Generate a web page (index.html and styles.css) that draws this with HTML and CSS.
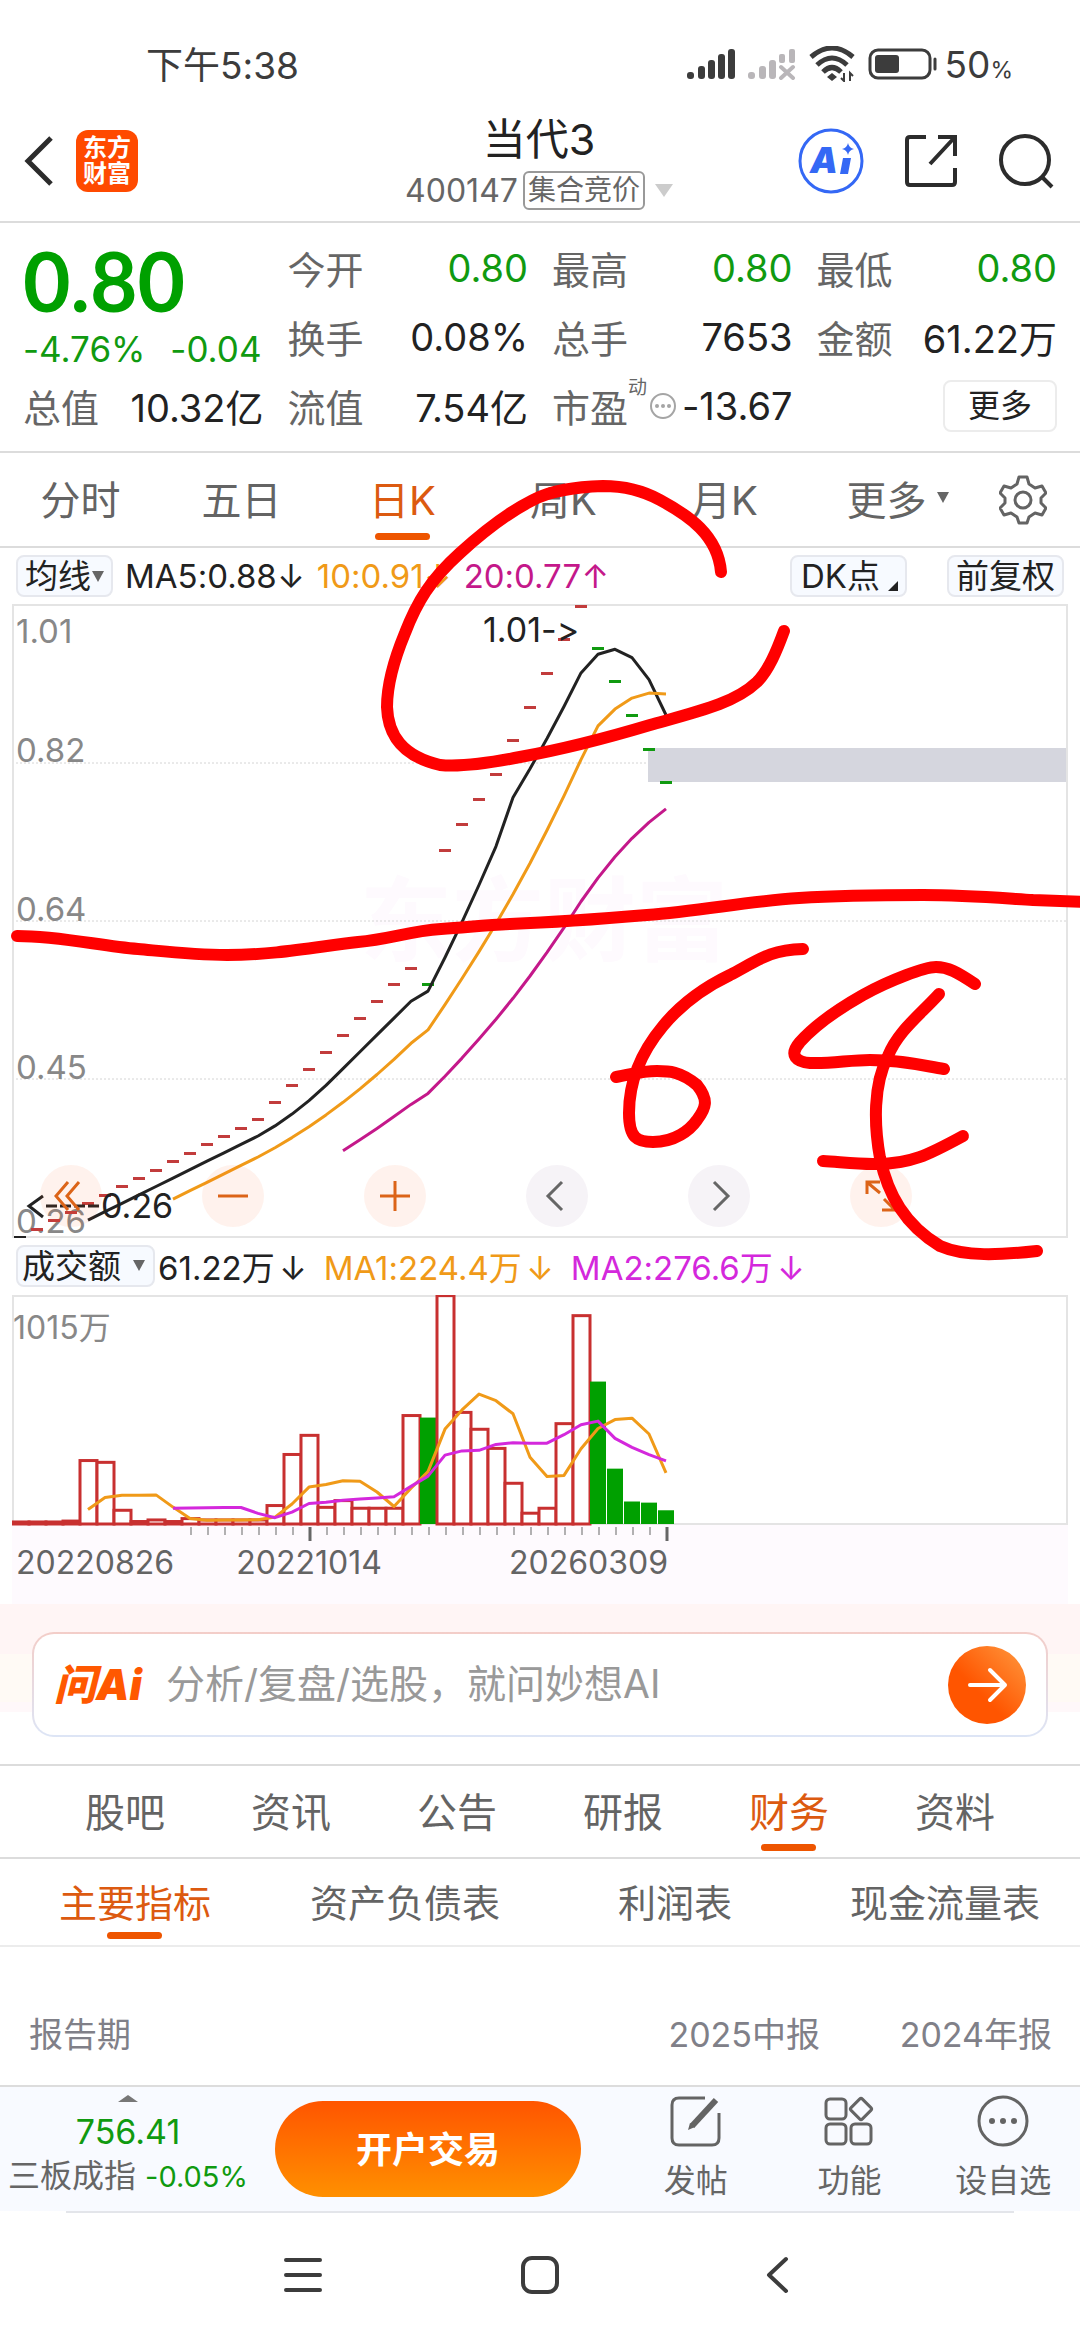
FILE: index.html
```html
<!DOCTYPE html>
<html lang="zh-CN">
<head>
<meta charset="utf-8">
<meta name="viewport" content="width=device-width, initial-scale=1">
<title>当代3 400147</title>
<link rel="stylesheet" href="styles.css">
</head>
<body>
<div class="page">

  <div class="status">
    <span class="status-time">下午5:38</span>
    <div class="status-icons">
      <svg width="50" height="32" viewBox="0 0 50 32" fill="#3c3c3c"><rect y="24" width="7" height="7" rx="3"/><rect x="11" y="18" width="7" height="13" rx="3"/><rect x="21" y="12" width="7" height="19" rx="3"/><rect x="31" y="6" width="7" height="25" rx="3"/><rect x="41" y="1" width="7" height="30" rx="3"/></svg>
      <svg width="50" height="32" viewBox="0 0 50 32" fill="#b9b6b9"><rect y="24" width="7" height="7" rx="3"/><rect x="11" y="18" width="7" height="13" rx="3"/><rect x="21" y="12" width="7" height="19" rx="3"/><rect x="31" y="6" width="6" height="9" rx="2"/><rect x="41" y="1" width="6" height="14" rx="2"/><path d="M33 19l12 11M45 19L33 30" stroke="#b9b6b9" stroke-width="4" stroke-linecap="round"/></svg>
      <svg width="48" height="36" viewBox="0 0 48 36" fill="none" stroke="#3c3c3c" stroke-width="5"><path d="M2 11Q23-7 44 11M8 19Q23 5 38 19M14 26Q23 17 32 26"/><path d="M23 27l5 4-5 4-5-4z" fill="#3c3c3c" stroke="none"/><path d="M35 27v8l-3-3M41 35v-8l3 3" stroke-width="2"/></svg>
      <svg width="70" height="32" viewBox="0 0 70 32"><rect x="2" y="2" width="60" height="28" rx="8" fill="none" stroke="#3c3c3c" stroke-width="3"/><rect x="7" y="7" width="24" height="18" rx="3" fill="#3c3c3c"/><path d="M67 11v10" stroke="#3c3c3c" stroke-width="3" stroke-linecap="round"/></svg>
      <span class="status-battery">50<small>%</small></span>
    </div>
  </div>

  <header class="header">
    <div class="header-side">
      <button class="icon-button" aria-label="返回"><svg width="30" height="50" viewBox="0 0 30 50" fill="none" stroke="#2c2c2c" stroke-width="5"><path d="M27 2L4 25l23 23"/></svg></button>
      <a class="brand" href="#">东方<br>财富</a>
    </div>
    <div class="header-title">
      <h1>当代3</h1>
      <button class="subtitle"><span>400147</span><span class="tag">集合竞价</span><i class="tri tri-pale"></i></button>
    </div>
    <div class="header-side header-actions">
      <button class="icon-button" aria-label="AI"><svg width="66" height="66" viewBox="0 0 66 66"><circle cx="33" cy="33" r="31" fill="none" stroke="#3468f5" stroke-width="3"/><text x="12" y="45" class="ai-mark">A</text><path d="M45 30h8l-3 16h-8zM50 15q1 5 6 6-5 1-6 6-1-5-6-6 5-1 6-6z" fill="#3468f5"/></svg></button>
      <button class="icon-button" aria-label="分享"><svg width="54" height="54" viewBox="0 0 54 54" fill="none" stroke="#2c2c2c" stroke-width="4"><path d="M22 3H6q-3 0-3 3v42q0 3 3 3h42q3 0 3-3V34M34 3h17v19M51 3L26 30"/></svg></button>
      <button class="icon-button" aria-label="搜索"><svg width="56" height="56" viewBox="0 0 56 56" fill="none" stroke="#2c2c2c" stroke-width="4"><circle cx="27" cy="27" r="24"/><path d="M43 43l11 11"/></svg></button>
    </div>
  </header>

  <section class="quote">
    <div class="quote-price">
      <strong>0.80</strong>
      <div class="pair down change"><span>-4.76%</span><span>-0.04</span></div>
    </div>
    <div class="pair"><span class="label">今开</span><span class="down">0.80</span></div>
    <div class="pair"><span class="label">最高</span><span class="down">0.80</span></div>
    <div class="pair"><span class="label">最低</span><span class="down">0.80</span></div>
    <div class="pair"><span class="label">换手</span><span>0.08%</span></div>
    <div class="pair"><span class="label">总手</span><span>7653</span></div>
    <div class="pair"><span class="label">金额</span><span>61.22万</span></div>
    <div class="pair"><span class="label">总值</span><span>10.32亿</span></div>
    <div class="pair"><span class="label">流值</span><span>7.54亿</span></div>
    <div class="pair"><span class="label pe">市盈<sup>动</sup><svg width="28" height="28" viewBox="0 0 28 28" fill="#a5a5a5"><circle cx="14" cy="14" r="12" fill="none" stroke="#a5a5a5" stroke-width="2"/><circle cx="8" cy="14" r="2"/><circle cx="14" cy="14" r="2"/><circle cx="20" cy="14" r="2"/></svg></span><span>-13.67</span></div>
    <button class="more">更多</button>
  </section>

  <nav class="tabs period-tabs">
    <a href="#">分时</a><a href="#">五日</a><a href="#" class="active">日K</a><a href="#">周K</a><a href="#">月K</a><a href="#">更多<i class="tri"></i></a>
    <button class="icon-button" aria-label="设置"><svg width="48" height="50" viewBox="0 0 48 50" fill="none" stroke="#646464" stroke-width="3" stroke-linejoin="round"><path d="M20 2h8l2 7 6 4 7-2 4 7-5 5v5l5 5-4 7-7-2-6 4-2 6h-8l-2-6-6-4-7 2-4-7 5-5v-5l-5-5 4-7 7 2 6-4z"/><circle cx="24" cy="25" r="8"/></svg></button>
  </nav>

  <div class="indicators">
    <button class="chip chip-ma">均线<i class="tri"></i></button>
    <span class="ma5">MA5:0.88<b>↓</b></span><span class="ma10">10:0.91<b>↓</b></span><span class="ma20">20:0.77<b>↑</b></span>
    <span class="spacer"></span>
    <button class="chip chip-dk">DK点<i class="corner"></i></button>
    <button class="chip">前复权</button>
  </div>

  <div class="chart">
    <svg class="plot" id="price-chart" viewBox="0 0 1056 634">
      <text x="348" y="350" class="watermark">东方财富</text>
      <g class="grid"><path d="M0 159H1056M0 317H1056M0 475H1056"/></g>
      <rect x="636" y="144" width="419" height="34" fill="#d5d6de"/>
      <path class="frame" d="M1 1H1055V633H1Z"/>
      <g class="axis"><text x="4" y="39">1.01</text><text x="4" y="158">0.82</text><text x="4" y="317">0.64</text><text x="4" y="475">0.45</text><text x="4" y="629">0.26</text></g>
      <g class="series"></g>
      <g class="mark"><text x="471" y="38">1.01-&gt;</text><text x="89" y="614">0.26</text><path d="M31 592L17 602l14 11"/><path class="dashes" d="M34 602H88"/></g>
    </svg>
    <div class="chart-tools">
      <button class="warm" aria-label="最早"><svg viewBox="0 0 62 62"><path d="M28 17L16 31l12 14M39 17L27 31l12 14"/></svg></button>
      <button class="warm" aria-label="缩小"><svg viewBox="0 0 62 62"><path d="M16 31h30"/></svg></button>
      <button class="warm" aria-label="放大"><svg viewBox="0 0 62 62"><path d="M16 31h30M31 16v30"/></svg></button>
      <button aria-label="左移"><svg viewBox="0 0 62 62"><path d="M36 17L22 31l14 14"/></svg></button>
      <button aria-label="右移"><svg viewBox="0 0 62 62"><path d="M26 17l14 14-14 14"/></svg></button>
      <button class="warm" aria-label="全屏"><svg viewBox="0 0 62 62"><path d="M17 29V17h13M18 18l12 10M45 33v12H32M44 44L34 34"/></svg></button>
    </div>
  </div>

  <div class="indicators indicators-volume">
    <button class="chip chip-volume">成交额<i class="tri"></i></button>
    <span class="vol">61.22万<b>↓</b></span><span class="ma10">MA1:224.4万<b>↓</b></span><span class="vol-ma2">MA2:276.6万<b>↓</b></span>
  </div>
  <div class="chart">
    <svg class="plot" id="volume-chart" viewBox="0 0 1056 309">
      <rect y="230" width="1056" height="79" fill="#fefafe"/>
      <path class="frame" d="M1 1H1055V229H1Z"/>
      <text x="1" y="44" class="axis-volume">1015万</text>
      <g class="series"></g>
      <g class="dates"><text x="4" y="279">20220826</text><text x="297" y="279" text-anchor="middle">20221014</text><text x="656" y="279" text-anchor="end">20260309</text></g>
    </svg>
  </div>

  <section class="ask">
    <form class="ask-box">
      <label class="ask-logo" for="ask">问Ai</label>
      <input id="ask" type="text" placeholder="分析/复盘/选股，就问妙想AI">
      <button type="button" aria-label="发送"><svg width="78" height="78" viewBox="0 0 78 78" fill="none" stroke="#fff" stroke-width="4" stroke-linecap="round" stroke-linejoin="round"><path d="M22 39h34M42 24l15 15-15 15"/></svg></button>
    </form>
  </section>

  <nav class="tabs info-tabs"><a href="#">股吧</a><a href="#">资讯</a><a href="#">公告</a><a href="#">研报</a><a href="#" class="active">财务</a><a href="#">资料</a></nav>
  <nav class="tabs report-tabs"><a href="#" class="active">主要指标</a><a href="#">资产负债表</a><a href="#">利润表</a><a href="#">现金流量表</a></nav>

  <table class="report">
    <tr><th scope="col">报告期</th><th scope="col">2025中报</th><th scope="col">2024年报</th></tr>
  </table>

  <footer class="dock">
    <button class="index">
      <i class="tri tri-up"></i>
      <span class="index-value">756.41</span>
      <span class="index-name">三板成指 <small>-0.05%</small></span>
    </button>
    <button class="trade">开户交易</button>
    <div class="dock-links">
      <a href="#"><svg width="52" height="52" viewBox="0 0 52 52" fill="none" stroke="#646464" stroke-width="3"><path d="M35 3H9Q2 3 2 10v33q0 7 7 7h33q7 0 7-7V18"/><path d="M22 31L46 5" stroke-width="6"/><path d="M18 35l2-7 5 4z" fill="#646464" stroke="none"/></svg>发帖</a>
      <a href="#"><svg width="52" height="52" viewBox="0 0 52 52" fill="none" stroke="#646464" stroke-width="3"><rect x="3" y="4" width="20" height="20" rx="4"/><rect x="3" y="29" width="20" height="20" rx="4"/><rect x="28" y="29" width="20" height="20" rx="4"/><rect x="30" y="6" width="16" height="16" rx="2" transform="rotate(45 38 14)"/></svg>功能</a>
      <a href="#"><svg width="52" height="52" viewBox="0 0 52 52" fill="#646464"><circle cx="26" cy="26" r="24" fill="none" stroke="#646464" stroke-width="3"/><circle cx="15" cy="26" r="3"/><circle cx="26" cy="26" r="3"/><circle cx="37" cy="26" r="3"/></svg>设自选</a>
    </div>
  </footer>

  <div class="system-nav">
    <button class="icon-button" aria-label="任务"><svg width="38" height="38" viewBox="0 0 38 38" stroke="#3c3c3c" stroke-width="4" stroke-linecap="round"><path d="M2 4h34M2 19h34M2 34h34"/></svg></button>
    <button class="icon-button" aria-label="主页"><svg width="38" height="38" viewBox="0 0 38 38" fill="none" stroke="#3c3c3c" stroke-width="4"><rect x="2" y="2" width="34" height="34" rx="9"/></svg></button>
    <button class="icon-button" aria-label="后退"><svg width="38" height="38" viewBox="0 0 38 38" fill="none" stroke="#3c3c3c" stroke-width="4" stroke-linecap="round" stroke-linejoin="round"><path d="M28 3L11 19l17 16"/></svg></button>
  </div>

  <!-- Hand-drawn markup over the chart -->
  <svg class="ink" viewBox="0 0 1080 2340" aria-hidden="true">
    <path d="M721 572C718 535 688 515 660 500C640 489 622 486 603 486C575 487 552 490 533 500C505 514 482 533 460 553C430 580 417 602 405 633C393 662 387 685 387 707C388 735 402 756 440 765C460 767 490 763 520 757C570 748 610 737 650 725C700 711 735 703 757 682C769 670 777 650 784 631"/>
    <path d="M17 936C60 936 100 946 138 949C170 952 195 955 227 955C275 955 315 947 358 942C390 939 410 931 441 929C470 927 485 925 510 924C560 922 600 919 647 915C700 911 750 901 799 898C845 895 880 895 923 895C965 895 1000 898 1033 900L1086 902"/>
    <path d="M803 949C770 950 760 959 730 975C705 987 682 1003 663 1026C643 1050 629 1078 629 1113C629 1138 637 1142 653 1142C675 1142 690 1130 697 1120C706 1108 709 1100 697 1085C680 1071 668 1071 657 1071C640 1071 630 1075 616 1077"/>
    <path d="M975 984C957 972 948 967 936 967C925 967 890 980 863 995C840 1008 818 1022 800 1042C788 1056 797 1062 810 1063C830 1064 850 1060 870 1060C900 1060 920 1065 944 1069"/>
    <path d="M939 994C920 1015 898 1031 888 1056C873 1085 874 1125 880 1158C888 1195 905 1225 940 1246C965 1257 1000 1255 1037 1251"/>
    <path d="M823 1161C840 1162 855 1164 873 1164C910 1165 930 1154 963 1136"/>
  </svg>
</div>
<script src="chart.js"></script>
</body>
</html>
```

FILE: styles.css
```css
* { box-sizing: border-box; }
body { margin: 0; background: #fff; color: #222; font-family: Inter, "Noto Sans CJK SC", sans-serif; font-feature-settings: "calt" 0; }
button, input { margin: 0; padding: 0; border: 0; background: none; color: inherit; font: inherit; font-feature-settings: inherit; }
a { color: inherit; text-decoration: none; }
svg { display: block; flex: none; }
.page { position: relative; }
.icon-button { display: flex; align-items: center; justify-content: center; }

.tri { flex: none; border: 6px solid transparent; border-top: 11px solid #666; border-bottom: 0; }
.tri-pale { border-width: 13px 9px 0; border-top-color: #ccc; margin-left: 10px; }
.tri-up { border-width: 0 10px 7px; border-bottom: 7px solid #777; }

/* Status bar */
.status { display: flex; justify-content: space-between; align-items: center; height: 100px; padding: 28px 67px 0 146px; color: #3c3c3c; }
.status-time { margin-bottom: 3px; font-size: 37px; }
.status-icons { display: flex; align-items: center; gap: 11px; }
.status-battery { font-size: 37px; margin-left: -4px; }
.status-battery small { font-size: 23px; }

/* Header */
.header { display: grid; grid-template-columns: 1fr auto 1fr; align-items: center; height: 123px; padding: 0 26px 0 24px; border-bottom: 2px solid #dcdcdc; }
.header-side { display: flex; align-items: center; gap: 22px; }
.header-actions { justify-content: flex-end; gap: 40px; }
.brand { width: 62px; height: 62px; padding-top: 5px; border-radius: 12px; background: #ff4a00; color: #fff; font-size: 24px; line-height: 26px; font-weight: 700; text-align: center; }
.ai-mark { font-size: 35px; font-weight: 900; font-style: italic; fill: #3468f5; }
.header-title { display: flex; flex-direction: column; align-items: center; }
h1 { margin: 0; font-size: 43px; line-height: 60px; font-weight: 400; }
.subtitle { display: flex; align-items: center; height: 44px; color: #666; font-size: 32px; }
.tag { margin-left: 5px; padding: 0 3px; border: 2px solid #999; border-radius: 6px; font-size: 28px; line-height: 35px; }

/* Quote */
.quote { display: grid; grid-template-columns: repeat(4, 1fr); grid-template-rows: repeat(3, 69px); column-gap: 24px; height: 230px; padding: 10px 23px; border-bottom: 2px solid #dcdcdc; font-size: 38px; }
.quote-price { grid-row: span 2; display: flex; flex-direction: column; }
.quote-price strong { color: #00a000; font-family: Lato, Inter, sans-serif; font-size: 82px; line-height: 94px; font-weight: 700; }
.quote-price .change { height: 44px; padding-right: 2px; font-size: 35px; }
.pair { display: flex; align-items: center; justify-content: space-between; white-space: nowrap; }
.label { color: #666; }
.down { color: #109a10; }
.pe { display: flex; align-items: center; }
.pe sup { align-self: flex-start; font-size: 19px; line-height: 20px; }
.pe svg { margin-left: 2px; }
.more { justify-self: end; align-self: center; width: 114px; height: 52px; border: 2px solid #ececec; border-radius: 8px; font-size: 32px; line-height: 46px; }

/* Tab rows */
.tabs { display: grid; border-bottom: 2px solid #dcdcdc; color: #646464; }
.tabs a { position: relative; display: flex; align-items: center; justify-content: center; gap: 10px; padding-bottom: 4px; white-space: nowrap; }
.tabs .active { color: #dc5a10; }
.tabs .active::after { content: ""; position: absolute; bottom: 6px; left: 50%; width: 55px; height: 7px; margin-left: -28px; border-radius: 4px; background: #ee5500; }
.period-tabs { grid-template-columns: repeat(5, 161fr) 185fr 66fr; height: 95px; padding-right: 24px; font-size: 40px; }
.info-tabs { grid-template-columns: repeat(6, 1fr); height: 95px; padding: 0 42px; border-top: 2px solid #dcdcdc; font-size: 40px; }
.report-tabs { grid-template-columns: repeat(4, 1fr); height: 88px; border-color: #ececec; font-size: 38px; }

/* Indicator rows */
.indicators { display: flex; align-items: center; height: 56px; padding: 0 16px; gap: 12px; font-size: 33px; white-space: nowrap; }
.indicators b { display: inline-block; width: 28px; font-weight: 400; text-align: right; }
.indicators-volume { gap: 17px; height: 57px; padding-bottom: 2px; }
.indicators-volume b { width: 32px; }
.spacer { flex: 1; }
.chip { display: flex; align-items: center; height: 42px; padding: 0 7px; border: 2px solid #e6e8ee; border-radius: 8px; background: #f7faff; font-size: 33px; line-height: 36px; }
.chip-ma { gap: 1px; }
.chip-dk { margin-right: 28px; gap: 8px; padding-left: 9px; }
.chip-volume { padding: 0 8px 0 4px; gap: 12px; margin-right: -14px; }
.corner { align-self: flex-end; margin-bottom: 4px; border: 5px solid #222; border-top-color: transparent; border-left-color: transparent; }
.ma10 { color: #f09a18; }
.ma20 { color: #c4188a; }
.vol-ma2 { color: #d428dc; }

/* Charts */
.chart { position: relative; margin: 0 12px; }
.plot { width: 100%; height: auto; }
.frame { fill: none; stroke: #e4e4e4; stroke-width: 2; }
.grid path { stroke: #d4d4d4; stroke-dasharray: 2 2; }
.axis { fill: #888; font-size: 33px; }
.axis-volume { fill: #888; font-size: 32px; }
.dates { fill: #646464; font-size: 32px; }
.mark { fill: #222; font-size: 34px; }
.mark path { fill: none; stroke: #222; stroke-width: 3; }
.mark .dashes { stroke-dasharray: 11 3; }
.watermark { fill: #fefafe; font-size: 92px; font-weight: 700; }
.line { fill: none; stroke-width: 3; stroke-linejoin: round; }
.chart-tools { position: absolute; left: 28px; right: 156px; bottom: 11px; display: flex; justify-content: space-between; }
.chart-tools button { width: 62px; height: 62px; border-radius: 50%; background: rgba(70, 20, 90, 0.05); }
.chart-tools .warm { background: rgba(255, 90, 20, 0.08); }
.chart-tools svg { width: 100%; fill: none; stroke: #666; stroke-width: 3; }
.chart-tools .warm svg { stroke: #dc6418; }

/* Ask box */
.ask { height: 160px; padding: 28px 32px; background: linear-gradient(#fff5f5 0 50px, #fffaf5 50px 98px, #fff8fa 98px 108px, #fff 108px); }
.ask-box { display: flex; align-items: center; height: 105px; padding: 0 20px; border: 2px solid transparent; border-radius: 22px; background: linear-gradient(#fff, #fff) padding-box, linear-gradient(#f3cdc8, #dde5f6) border-box; }
.ask-logo { width: 112px; color: #ff5800; font-size: 42px; font-weight: 900; font-style: italic; line-height: 50px; white-space: nowrap; }
.ask-box input { flex: 1; min-width: 0; height: 60px; padding-bottom: 2px; font-size: 39px; }
.ask-box input::placeholder { color: #999; opacity: 1; }
.ask-box button { border-radius: 50%; background: linear-gradient(225deg, #ff9a40, #ff5500 60%); }

/* Report table */
.report { width: 100%; border-collapse: collapse; color: #808088; font-size: 34px; }
.report th { height: 138px; padding: 32px 28px 0 0; font-weight: 400; text-align: right; }
.report th:first-child { padding-left: 29px; text-align: left; }
.report th:last-child { width: 232px; }

/* Dock */
.dock { display: flex; align-items: center; height: 126px; border-top: 2px solid #dcdcdc; background: #f8faff; color: #666; }
.index { display: flex; flex-direction: column; align-items: center; width: 252px; height: 124px; padding: 8px 0 0 4px; white-space: nowrap; }
.index-value { padding-top: 4px; color: #109a10; font-size: 34px; line-height: 52px; }
.index-name { font-size: 32px; line-height: 36px; }
.index small { color: #109a10; font-size: 29px; }
.trade { width: 306px; height: 96px; margin-left: 23px; padding-bottom: 4px; border-radius: 48px; background: linear-gradient(#ff5500, #ff9000); color: #fff; font-size: 36px; font-weight: 600; }
.dock-links { flex: 1; display: flex; justify-content: space-around; padding: 0 0 0 38px; font-size: 32px; }
.dock-links a { display: flex; flex-direction: column; align-items: center; width: 100px; gap: 12px; line-height: 44px; white-space: nowrap; }

.system-nav { display: flex; justify-content: center; align-items: center; gap: 199px; height: 129px; margin: 0 66px; padding-bottom: 4px; border-top: 2px solid #e3e5ea; }

.ink { position: absolute; top: 0; left: 0; width: 100%; height: auto; pointer-events: none; fill: none; stroke: #f00; stroke-width: 12; stroke-linecap: round; stroke-linejoin: round; }
```

FILE: chart.js
```js
const STEP = 17;
const FIRST = 8;

const closes = [26, 27, 28, 29, 30, 31, 32, 33, 34, 35, 36, 37, 38, 39, 40,
  42, 44, 46, 48, 50, 52, 54, 56, 58, 56,
  72, 75, 78, 81, 85, 89, 93, 97, 101, 96, 92, 88, 84, 80];
const volumes = [9, 9, 9, 13, 282, 274, 61, 11, 18, 11, 24, 18, 18, 18, 18,
  82, 309, 394, 74, 104, 70, 70, 70, 482, 473,
  1015, 496, 421, 336, 181, 48, 70, 446, 926, 633, 246, 100, 95, 61];

const xAt = i => FIRST + STEP * i;
const priceY = p => 633 - (p - 26) * 8.42;
const volumeY = v => 229 - v * 0.225;
const falling = i => i > 0 && closes[i] < closes[i - 1];

function add(parent, name, attrs) {
  const node = document.createElementNS('http://www.w3.org/2000/svg', name);
  for (const key in attrs) node.setAttribute(key, attrs[key]);
  parent.appendChild(node);
}

function average(parent, data, span, toY, color) {
  const points = [];
  for (let i = span - 1; i < data.length; i++) {
    const sum = data.slice(i - span + 1, i + 1).reduce((a, b) => a + b, 0);
    points.push(xAt(i) + ',' + toY(sum / span).toFixed(1));
  }
  add(parent, 'polyline', { class: 'line', points: points.join(' '), stroke: color });
}

const price = document.querySelector('#price-chart .series');
closes.forEach((p, i) => add(price, 'rect', {
  x: xAt(i) - 6, y: Math.round(priceY(p)) - 1, width: 12, height: 3,
  fill: i === 0 ? '#222' : falling(i) ? '#109a10' : '#c23c3c'
}));
average(price, closes, 5, priceY, '#222');
average(price, closes, 10, priceY, '#f09a18');
average(price, closes, 20, priceY, '#c4188a');

const volume = document.querySelector('#volume-chart .series');
volumes.forEach((v, i) => {
  const y = volumeY(v);
  add(volume, 'rect', falling(i)
    ? { x: xAt(i) - 8, y: y, width: 16, height: 229 - y, fill: '#00a000' }
    : { x: xAt(i) - 8, y: y, width: 17, height: 229 - y, fill: '#fff', stroke: '#c83030', 'stroke-width': 3 });
});
average(volume, volumes, 5, volumeY, '#f09a18');
average(volume, volumes, 10, volumeY, '#d428dc');
for (let i = 10; i < closes.length; i++) {
  const major = i === 17 || i === 38;
  add(volume, 'path', {
    d: 'M' + (xAt(i) + 1) + ' 232v' + (major ? 14 : 8),
    stroke: '#666', 'stroke-width': major ? 3 : 1
  });
}
```
